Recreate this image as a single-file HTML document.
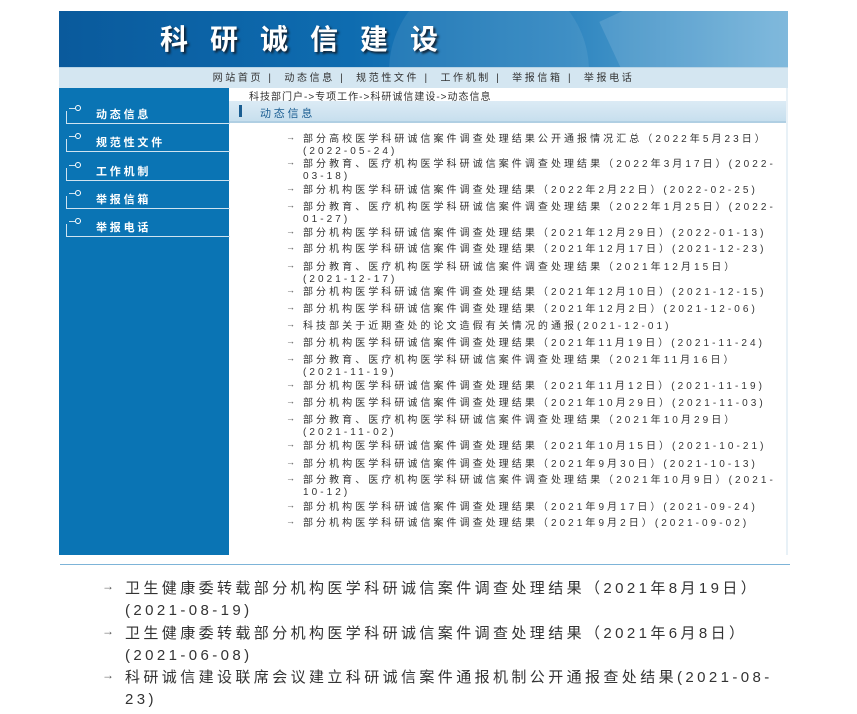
<!DOCTYPE html>
<html><head><meta charset="utf-8"><style>
body{margin:0;width:857px;height:714px;background:#fff;position:relative;overflow:hidden;font-family:"Liberation Sans","Noto Sans CJK SC",sans-serif;}
.ban{position:absolute;left:59px;top:11px;width:729px;height:56px;background:linear-gradient(90deg,#0a5a9c 0%,#0e6cb0 40%,#2f86c0 70%,#6fb0d8 100%);overflow:hidden}
.ban .c1{position:absolute;left:330px;top:-40px;width:200px;height:200px;border-radius:50%;background:rgba(255,255,255,.08)}
.ban .c2{position:absolute;left:560px;top:-60px;width:300px;height:160px;transform:rotate(-25deg);background:rgba(255,255,255,.12)}
.ban h1{position:absolute;left:101px;top:7px;margin:0;font-size:28px;font-weight:bold;color:#fff;letter-spacing:22px;text-shadow:2px 2px 2px #123;font-family:"Noto Sans CJK SC",sans-serif}
.nav{position:absolute;left:59px;top:67px;width:729px;height:21px;background:#d4e6f1;border-top:1px solid #b8d4e6;font-size:10px;color:#333;text-align:center;line-height:21px;letter-spacing:2.6px;box-sizing:border-box;white-space:pre}
.side{position:absolute;left:59px;top:88px;width:170px;height:467px;background:#0a74b4}
.side div{position:absolute;left:7px;width:163px;height:12px;border-left:1px solid #cfe3f0;border-bottom:1px solid #cfe3f0;color:#fff;font-size:11px;font-weight:bold;letter-spacing:2.8px}
.side div span{position:absolute;left:29px;top:-5px}
.side div i{position:absolute;left:2px;top:-3px;width:6px;border-top:1px solid #cfe3f0}
.side div b{position:absolute;left:8px;top:-6px;width:4px;height:4px;border:1px solid #fff;border-radius:50%}
.bc{position:absolute;left:249px;top:88px;font-size:10px;color:#333;letter-spacing:1px}
.tb{position:absolute;left:229px;top:101px;width:558px;height:22px;background:linear-gradient(#dcebf5,#c7dfee);border-bottom:2px solid #b0cfe3;box-sizing:border-box}
.tb i{position:absolute;left:10px;top:4px;width:3px;height:12px;background:#1b5e92}
.tb span{position:absolute;left:31px;top:4px;font-size:11px;color:#1b5e92;letter-spacing:2.8px}
.rb{position:absolute;left:786px;top:88px;width:2px;height:467px;background:#e8f1f7}
.l{position:absolute;left:303px;font-size:10px;color:#333;letter-spacing:3.05px;white-space:nowrap;line-height:12px;margin-top:3px}
.a{position:absolute;left:286px;font-size:9px;color:#555;line-height:12px;margin-top:0px}
.hr{position:absolute;left:60px;top:564px;width:730px;height:1px;background:#7db4d8}
.bl{position:absolute;left:125px;font-size:15px;color:#333;letter-spacing:3.4px;white-space:nowrap;line-height:22px;margin-top:1px}
.ba{position:absolute;left:102px;font-size:12px;color:#555;line-height:22px;margin-top:-2px}
</style></head><body>
<div class="ban"><div class="c1"></div><div class="c2"></div><h1>科研诚信建设</h1></div>
<div class="nav">网站首页 |  动态信息 |  规范性文件 |  工作机制 |  举报信箱 |  举报电话</div>
<div class="side">
<div style="top:23px"><i></i><b></b><span>动态信息</span></div>
<div style="top:51px"><i></i><b></b><span>规范性文件</span></div>
<div style="top:80px"><i></i><b></b><span>工作机制</span></div>
<div style="top:108px"><i></i><b></b><span>举报信箱</span></div>
<div style="top:136px"><i></i><b></b><span>举报电话</span></div>
</div>
<div class="bc">科技部门户-&gt;专项工作-&gt;科研诚信建设-&gt;动态信息</div>
<div class="tb"><i></i><span>动态信息</span></div>
<div class="rb"></div>

<div class="a" style="top:131px">→</div><div class="l" style="top:131px">部分高校医学科研诚信案件调查处理结果公开通报情况汇总（2022年5月23日）</div>
<div class="l" style="top:143px">(2022-05-24)</div>
<div class="a" style="top:156px">→</div><div class="l" style="top:156px">部分教育、医疗机构医学科研诚信案件调查处理结果（2022年3月17日）(2022-</div>
<div class="l" style="top:168px">03-18)</div>
<div class="a" style="top:182px">→</div><div class="l" style="top:182px">部分机构医学科研诚信案件调查处理结果（2022年2月22日）(2022-02-25)</div>
<div class="a" style="top:199px">→</div><div class="l" style="top:199px">部分教育、医疗机构医学科研诚信案件调查处理结果（2022年1月25日）(2022-</div>
<div class="l" style="top:211px">01-27)</div>
<div class="a" style="top:225px">→</div><div class="l" style="top:225px">部分机构医学科研诚信案件调查处理结果（2021年12月29日）(2022-01-13)</div>
<div class="a" style="top:241px">→</div><div class="l" style="top:241px">部分机构医学科研诚信案件调查处理结果（2021年12月17日）(2021-12-23)</div>
<div class="a" style="top:259px">→</div><div class="l" style="top:259px">部分教育、医疗机构医学科研诚信案件调查处理结果（2021年12月15日）</div>
<div class="l" style="top:271px">(2021-12-17)</div>
<div class="a" style="top:284px">→</div><div class="l" style="top:284px">部分机构医学科研诚信案件调查处理结果（2021年12月10日）(2021-12-15)</div>
<div class="a" style="top:301px">→</div><div class="l" style="top:301px">部分机构医学科研诚信案件调查处理结果（2021年12月2日）(2021-12-06)</div>
<div class="a" style="top:318px">→</div><div class="l" style="top:318px">科技部关于近期查处的论文造假有关情况的通报(2021-12-01)</div>
<div class="a" style="top:335px">→</div><div class="l" style="top:335px">部分机构医学科研诚信案件调查处理结果（2021年11月19日）(2021-11-24)</div>
<div class="a" style="top:352px">→</div><div class="l" style="top:352px">部分教育、医疗机构医学科研诚信案件调查处理结果（2021年11月16日）</div>
<div class="l" style="top:364px">(2021-11-19)</div>
<div class="a" style="top:378px">→</div><div class="l" style="top:378px">部分机构医学科研诚信案件调查处理结果（2021年11月12日）(2021-11-19)</div>
<div class="a" style="top:395px">→</div><div class="l" style="top:395px">部分机构医学科研诚信案件调查处理结果（2021年10月29日）(2021-11-03)</div>
<div class="a" style="top:412px">→</div><div class="l" style="top:412px">部分教育、医疗机构医学科研诚信案件调查处理结果（2021年10月29日）</div>
<div class="l" style="top:424px">(2021-11-02)</div>
<div class="a" style="top:438px">→</div><div class="l" style="top:438px">部分机构医学科研诚信案件调查处理结果（2021年10月15日）(2021-10-21)</div>
<div class="a" style="top:456px">→</div><div class="l" style="top:456px">部分机构医学科研诚信案件调查处理结果（2021年9月30日）(2021-10-13)</div>
<div class="a" style="top:472px">→</div><div class="l" style="top:472px">部分教育、医疗机构医学科研诚信案件调查处理结果（2021年10月9日）(2021-</div>
<div class="l" style="top:484px">10-12)</div>
<div class="a" style="top:499px">→</div><div class="l" style="top:499px">部分机构医学科研诚信案件调查处理结果（2021年9月17日）(2021-09-24)</div>
<div class="a" style="top:515px">→</div><div class="l" style="top:515px">部分机构医学科研诚信案件调查处理结果（2021年9月2日）(2021-09-02)</div>

<div class="hr"></div>
<div class="ba" style="top:577px">→</div><div class="bl" style="top:577px">卫生健康委转载部分机构医学科研诚信案件调查处理结果（2021年8月19日）</div>
<div class="bl" style="top:599px">(2021-08-19)</div>
<div class="ba" style="top:622px">→</div><div class="bl" style="top:622px">卫生健康委转载部分机构医学科研诚信案件调查处理结果（2021年6月8日）</div>
<div class="bl" style="top:644px">(2021-06-08)</div>
<div class="ba" style="top:666px">→</div><div class="bl" style="top:666px">科研诚信建设联席会议建立科研诚信案件通报机制公开通报查处结果(2021-08-</div>
<div class="bl" style="top:688px">23)</div>
</body></html>
